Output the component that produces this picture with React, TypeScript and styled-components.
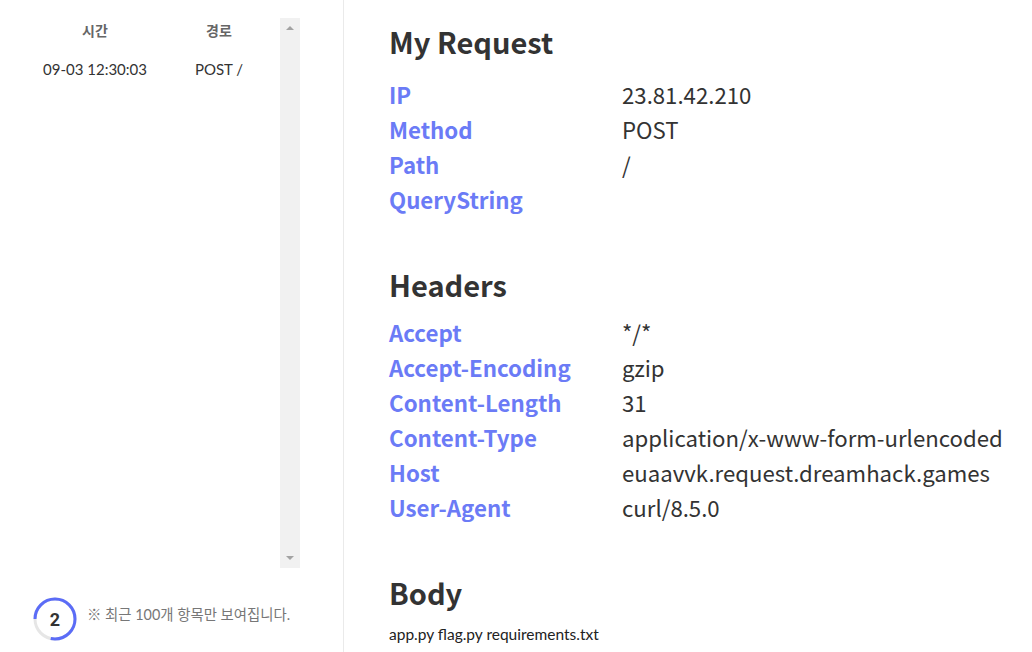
import React from "react";
import styled, { createGlobalStyle } from "styled-components";

const Global = createGlobalStyle`
  html, body { margin: 0; padding: 0; background: #fff; }
  body { font-family: Lato, "Noto Sans CJK KR", sans-serif; color: #333; }
`;

const Page = styled.div`
  display: flex;
  width: 1032px;
  height: 652px;
  overflow: hidden;
`;

const Sidebar = styled.aside`
  width: 344px;
  flex: none;
  border-right: 1px solid #eaeaea;
  display: flex;
  flex-direction: column;
  box-sizing: border-box;
`;

const ListArea = styled.div`
  display: flex;
  padding: 18px 43px 0 0;
  height: 568px;
  box-sizing: border-box;
`;

const Table = styled.div`
  flex: 1;
  display: grid;
  grid-template-columns: 190px 58px;
  grid-auto-rows: min-content;
`;

const HeadCell = styled.div`
  font-family: "Noto Sans CJK KR", sans-serif;
  font-weight: 700;
  font-size: 14px;
  color: #666;
  text-align: center;
  height: 24px;
  line-height: 24px;
`;

const Cell = styled.div`
  font-size: 15px;
  color: #333;
  text-align: center;
  height: 40px;
  line-height: 54px;
`;

const Scrollbar = styled.div`
  width: 20px;
  background: #f1f1f1;
  display: flex;
  flex-direction: column;
  justify-content: space-between;
  align-items: center;
  padding: 8px 0;
  box-sizing: border-box;
`;

const Arrow = styled.div<{ $down?: boolean }>`
  width: 0;
  height: 0;
  border-left: 4px solid transparent;
  border-right: 4px solid transparent;
  ${(p) => (p.$down ? "border-top: 4px solid #a3a3a3;" : "border-bottom: 4px solid #a3a3a3;")}
`;

const Footer = styled.div`
  display: flex;
  align-items: center;
  gap: 10px;
  padding: 29px 0 0 33px;
`;

const Badge = styled.div`
  position: relative;
  width: 44px;
  height: 44px;
  display: flex;
  align-items: center;
  justify-content: center;
  font-family: Roboto, sans-serif;
  font-weight: 700;
  font-size: 18px;
  color: #333;
  svg { position: absolute; inset: 0; }
`;

const Note = styled.div`
  font-family: Lato, "Noto Sans CJK KR", sans-serif;
  font-size: 14.4px;
  color: #777;
  margin-top: -11px;
`;

const Main = styled.main`
  flex: 1;
  padding: 20px 0 0 45px;
`;

const Heading = styled.h2<{ $top?: number; $bottom?: number }>`
  font-family: "Noto Sans CJK KR", sans-serif;
  font-weight: 700;
  font-size: 29px;
  color: #333;
  margin: ${(p) => p.$top ?? 0}px 0 ${(p) => p.$bottom ?? 9.5}px;
  line-height: 42px;
`;

const Rows = styled.div`
  display: grid;
  grid-template-columns: 233px 1fr;
  grid-auto-rows: 35px;
  align-items: center;
`;

const Key = styled.div`
  font-family: "Noto Sans CJK KR", sans-serif;
  font-weight: 700;
  font-size: 22.3px;
  color: #6b7bf6;
`;

const Val = styled.div`
  font-family: "Noto Sans CJK KR", sans-serif;
  font-size: 22.2px;
  color: #333;
`;

const BodyText = styled.div`
  font-family: Lato, sans-serif;
  font-size: 15.5px;
  line-height: 22px;
  color: #222;
`;

const request: [string, string][] = [
  ["IP", "23.81.42.210"],
  ["Method", "POST"],
  ["Path", "/"],
  ["QueryString", ""],
];

const headers: [string, string][] = [
  ["Accept", "*/*"],
  ["Accept-Encoding", "gzip"],
  ["Content-Length", "31"],
  ["Content-Type", "application/x-www-form-urlencoded"],
  ["Host", "euaavvk.request.dreamhack.games"],
  ["User-Agent", "curl/8.5.0"],
];

function KV({ items }: { items: [string, string][] }) {
  return (
    <Rows>
      {items.map(([k, v]) => (
        <React.Fragment key={k}>
          <Key>{k}</Key>
          <Val>{v}</Val>
        </React.Fragment>
      ))}
    </Rows>
  );
}

export default function App() {
  const r = 20;
  const c = 2 * Math.PI * r;
  return (
    <>
      <Global />
      <Page>
        <Sidebar>
          <ListArea>
            <Table>
              <HeadCell>시간</HeadCell>
              <HeadCell>경로</HeadCell>
              <Cell>09-03 12:30:03</Cell>
              <Cell>POST /</Cell>
            </Table>
            <Scrollbar>
              <Arrow />
              <Arrow $down />
            </Scrollbar>
          </ListArea>
          <Footer>
            <Badge>
              <svg width="44" height="44" viewBox="0 0 44 44">
                <circle cx="22" cy="22" r={r} fill="none" stroke="#e6e6e6" strokeWidth="3" />
                <circle
                  cx="22"
                  cy="22"
                  r={r}
                  fill="none"
                  stroke="#5b6cf7"
                  strokeWidth="3"
                  strokeDasharray={`${c * 0.78} ${c}`}
                  transform="rotate(180 22 22)"
                />
              </svg>
              2
            </Badge>
            <Note>※ 최근 100개 항목만 보여집니다.</Note>
          </Footer>
        </Sidebar>
        <Main>
          <Heading $bottom={14.5}>My Request</Heading>
          <KV items={request} />
          <Heading $top={46.5}>Headers</Heading>
          <KV items={headers} />
          <Heading $top={46.5}>Body</Heading>
          <BodyText>app.py flag.py requirements.txt</BodyText>
        </Main>
      </Page>
    </>
  );
}
